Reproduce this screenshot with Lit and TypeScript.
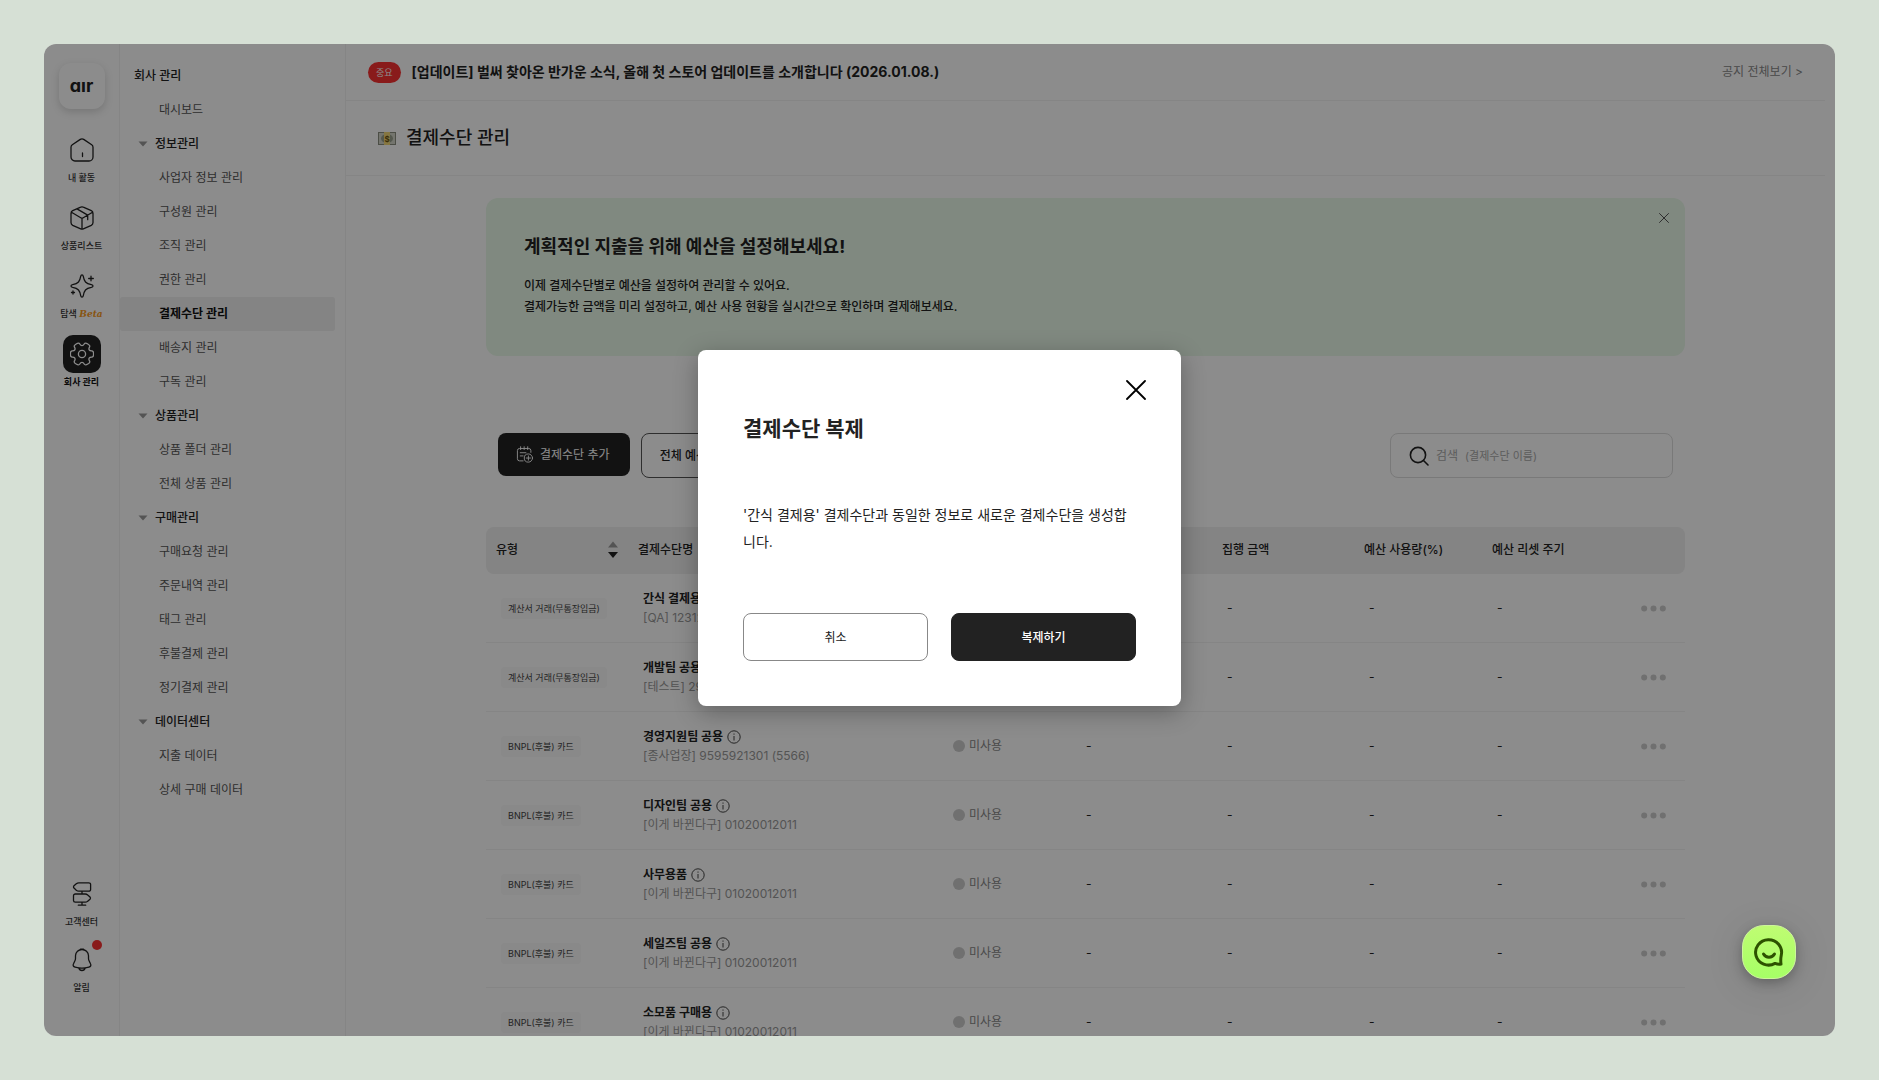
import { LitElement, html, css, svg } from "lit";
import { customElement } from "lit/decorators.js";

const stroke = (body: unknown, size = 24) => html`<svg
  width=${size}
  height=${size}
  viewBox="0 0 24 24"
  fill="none"
  stroke="currentColor"
  stroke-width="1.3"
  stroke-linecap="round"
  stroke-linejoin="round"
  aria-hidden="true"
>${body}</svg>`;

/** Outline of a six-toothed gear, rounded by running quadratics through the midpoints. */
function gearPath(): string {
  const points: [number, number][] = [];
  for (let tooth = 0; tooth < 6; tooth++) {
    for (const [offset, radius] of [[-15, 12], [15, 12], [21, 8.4], [39, 8.4]]) {
      const angle = ((tooth * 60 + offset) * Math.PI) / 180;
      points.push([12 + radius * Math.cos(angle), 12 + radius * Math.sin(angle)]);
    }
  }
  const mid = (i: number) => {
    const [a, b] = [points[i % points.length], points[(i + 1) % points.length]];
    return `${((a[0] + b[0]) / 2).toFixed(2)} ${((a[1] + b[1]) / 2).toFixed(2)}`;
  };
  let d = `M${mid(0)}`;
  for (let i = 1; i <= points.length; i++) {
    const p = points[i % points.length];
    d += `Q${p[0].toFixed(2)} ${p[1].toFixed(2)} ${mid(i)}`;
  }
  return d + "Z";
}

const icons = {
  home: stroke(svg`<path d="M10.3 1.4a3 3 0 0 1 3.4 0l8 5.4a3 3 0 0 1 1.3 2.5V19a4 4 0 0 1-4 4H5a4 4 0 0 1-4-4V9.3a3 3 0 0 1 1.3-2.5zM12.5 15v3.5"/>`),
  box: stroke(svg`<path d="M10.7 1.1a3 3 0 0 1 2.6 0l8 3.6A3 3 0 0 1 23 7.4v9.2a3 3 0 0 1-1.7 2.7l-8 3.6a3 3 0 0 1-2.6 0l-8-3.6A3 3 0 0 1 1 16.6V7.4a3 3 0 0 1 1.7-2.7zM1.5 6.2 12 12.5l10.500-6.300M12 12.500V23M7 2.900l10.700 6.200v4.600"/>`),
  sparkle: stroke(svg`<path d="M12 .8c.8 0 1.100.6 1.300 1.600.9 5 2.300 7.300 8 8.300 1 .2 1.700.5 1.700 1.300s-.7 1.100-1.700 1.300c-5.700 1-7.100 3.300-8 8.300-.2 1-.5 1.600-1.300 1.600s-1.100-.6-1.300-1.600c-.9-5-2.300-7.300-8-8.300C1.700 13.100 1 12.800 1 12s.7-1.100 1.700-1.300c5.700-1 7.100-3.300 8-8.300.2-1 .5-1.600 1.300-1.600zM21 2.200v4.600M18.700 4.500h4.600M3 17v3M1.500 18.500h3"/>`),
  gear: stroke(svg`<circle cx="12" cy="12" r="3.600"/><path d=${gearPath()} />`),
  sign: stroke(svg`<path d="M8.800.8h10a1.800 1.800 0 0 1 1.800 1.800v4.800a1.800 1.800 0 0 1-1.800 1.800h-10c-1.100 0-1.800-.4-2.500-1L4 6.100a1.600 1.600 0 0 1 0-2.300l2.300-2c.7-.6 1.400-1 2.500-1zM15.200 12H5.300a1.800 1.800 0 0 0-1.800 1.800v4.600a1.800 1.800 0 0 0 1.800 1.800h9.900c1.100 0 1.800-.4 2.500-1l2.300-2a1.600 1.600 0 0 0 0-2.200l-2.300-2c-.7-.6-1.400-1-2.500-1zM12 9.200V12M12 20.200v3M8.300 23.200h7.400"/>`),
  bell: stroke(svg`<path d="M12 1.500a6.500 6.500 0 0 0-6.500 6.300v2.700c0 1.100-.3 1.900-.8 2.800L3.500 15.700c-.9 1.700-.1 2.900 1.600 3.400 4.500 1.300 9.300 1.300 13.800 0 1.700-.5 2.500-1.700 1.600-3.400l-1.200-2.400c-.5-.9-.8-1.700-.8-2.800V7.800A6.500 6.500 0 0 0 12 1.500zM10.500 1.200h3M8.800 20c.5 1.700 1.700 2.500 3.200 2.500s2.700-.8 3.200-2.500"/>`),
  add: stroke(svg`<path d="M21 9V6.500a3 3 0 0 0-3-3H5a3 3 0 0 0-3 3V18a3 3 0 0 0 3 3h5M6.500 1v4M11.500 1v4M16.500 1v4M6 9.500h8M6 14h4M17.500 14v6M14.500 17h6"/><circle cx="17.500" cy="17" r="5.800"/>`, 17),
  search: html`<svg width="20" height="20" viewBox="0 0 20 20" fill="none" stroke="#222" stroke-width="1.600" stroke-linecap="round" aria-hidden="true"><circle cx="9" cy="9" r="7.600"/><path d="m14.500 14.500 4.500 4.500"/></svg>`,
  info: html`<svg class="info" width="14" height="14" viewBox="0 0 14 14" fill="none" stroke="#444" aria-hidden="true"><circle cx="7" cy="7" r="6.200"/><path d="M7 6v4.500M7 3.500v1.200"/></svg>`,
};

const cross = (size: number, width: number) => html`<svg width=${size} height=${size} viewBox="0 0 20 20" fill="none" stroke="currentColor" stroke-width=${width} stroke-linecap="round" aria-hidden="true"><path d="m1 1 18 18M19 1 1 19"/></svg>`;

const menu = [
  { items: ["대시보드"] },
  { title: "정보관리", items: ["사업자 정보 관리", "구성원 관리", "조직 관리", "권한 관리", "결제수단 관리", "배송지 관리", "구독 관리"] },
  { title: "상품관리", items: ["상품 폴더 관리", "전체 상품 관리"] },
  { title: "구매관리", items: ["구매요청 관리", "주문내역 관리", "태그 관리", "후불결제 관리", "정기결제 관리"] },
  { title: "데이터센터", items: ["지출 데이터", "상세 구매 데이터"] },
];

const INVOICE = "계산서 거래(무통장입금)";
const BNPL = "BNPL(후불) 카드";
const rows = [
  { type: INVOICE, name: "간식 결제용", sub: "[QA] 1231231231" },
  { type: INVOICE, name: "개발팀 공용", sub: "[테스트] 2948102931" },
  { type: BNPL, name: "경영지원팀 공용", sub: "[종사업장] 9595921301 (5566)" },
  { type: BNPL, name: "디자인팀 공용", sub: "[이게 바뀐다구] 01020012011" },
  { type: BNPL, name: "사무용품", sub: "[이게 바뀐다구] 01020012011" },
  { type: BNPL, name: "세일즈팀 공용", sub: "[이게 바뀐다구] 01020012011" },
  { type: BNPL, name: "소모품 구매용", sub: "[이게 바뀐다구] 01020012011" },
];

const base = css`
  :host, * { box-sizing: border-box; }
  h1, h2, p, ul, button, input { margin: 0; padding: 0; }
  button, input { font: inherit; color: inherit; border: 0; background: none; }
  a { color: inherit; text-decoration: none; }
  ul { list-style: none; }
  svg { display: block; flex: none; }
`;

@customElement("app-rail")
class AppRail extends LitElement {
  static styles = [base, css`
    :host { display: flex; flex-direction: column; align-items: center; flex: none; width: 76px; padding: 19px 0 39px; border-right: 1px solid #f2f2f2; }
    .logo { display: flex; align-items: center; justify-content: center; width: 46px; height: 46px; margin-bottom: 22px; border-radius: 12px; background: #fff; box-shadow: 0 3px 8px rgba(0, 0, 0, .16); font-size: 18px; line-height: 20px; font-weight: 700; font-feature-settings: "cv11"; color: #222; }
    .group { display: flex; flex-direction: column; gap: 12px; width: 100%; }
    .foot { margin-top: auto; gap: 10px; }
    .item { display: flex; flex-direction: column; align-items: center; font-size: 9px; line-height: 18px; font-weight: 500; color: #333; white-space: nowrap; }
    .tile { position: relative; display: flex; align-items: center; justify-content: center; width: 38px; height: 38px; border-radius: 10px; color: #222; }
    .active { font-weight: 700; color: #111; }
    .active .tile { background: #222; color: #fff; }
    .beta { font-family: "DejaVu Serif", serif; font-size: 9px; font-style: italic; font-weight: 700; color: #f79a1e; }
    .dot { position: absolute; top: -1px; right: -1px; width: 10px; height: 10px; border-radius: 50%; background: #fa3232; }
  `];
  render() {
    return html`
      <a class="logo" href="#">aır</a>
      <nav class="group">
        <a class="item" href="#"><span class="tile">${icons.home}</span>내 활동</a>
        <a class="item" href="#"><span class="tile">${icons.box}</span>상품리스트</a>
        <a class="item" href="#"><span class="tile">${icons.sparkle}</span><span>탐색 <span class="beta">Beta</span></span></a>
        <a class="item active" href="#"><span class="tile">${icons.gear}</span>회사 관리</a>
      </nav>
      <nav class="group foot">
        <a class="item" href="#"><span class="tile">${icons.sign}</span>고객센터</a>
        <a class="item" href="#"><span class="tile">${icons.bell}<span class="dot"></span></span>알림</a>
      </nav>`;
  }
}

@customElement("side-menu")
class SideMenu extends LitElement {
  static styles = [base, css`
    :host { display: block; flex: none; width: 226px; padding: 15px 10px 0 0; border-right: 1px solid #f2f2f2; font-size: 12px; line-height: 34px; color: #222; }
    .heading { padding-left: 14px; font-size: 12px; font-weight: 500; }
    .group { display: flex; align-items: center; gap: 7px; width: 100%; padding-left: 18px; font-weight: 500; }
    .item { display: block; padding-left: 39px; border-radius: 3px; color: #555; }
    .active { background: #f0f0f0; color: #111; font-weight: 700; }
  `];
  render() {
    return html`
      <h2 class="heading">회사 관리</h2>
      ${menu.map((g) => html`
        ${g.title ? html`<button class="group"><svg width="10" height="6" viewBox="0 0 10 6" fill="#999" aria-hidden="true"><path d="M.5.500h9L5 5.500z"/></svg>${g.title}</button>` : ""}
        <ul>${g.items.map((i) => html`<li><a href="#" class="item ${i === "결제수단 관리" ? "active" : ""}">${i}</a></li>`)}</ul>`)}`;
  }
}

@customElement("payment-table")
class PaymentTable extends LitElement {
  static styles = [base, css`
    :host { display: block; }
    .table { width: 100%; border-collapse: separate; border-spacing: 0; table-layout: fixed; font-size: 12px; line-height: 20px; color: #222; }
    .c-type { width: 142px; } .c-status { width: 133px; } .c-budget { width: 141px; } .c-spent { width: 142px; }
    .c-usage { width: 128px; } .c-reset { width: 128px; } .c-more { width: 75px; }
    th { height: 47px; padding: 0 10px 2px; background: #f0f0f0; text-align: left; font-weight: 500; }
    th:first-child { border-radius: 8px 0 0 8px; }
    th:last-child { border-radius: 0 8px 8px 0; }
    td { height: 69px; padding: 0 15px; border-bottom: 1px solid #f2f2f2; white-space: nowrap; }
    .sort { display: flex; align-items: center; justify-content: space-between; }
    .badge { display: inline-block; padding: 0 7px; border-radius: 4px; background: #f9f9f9; font-size: 9px; line-height: 21px; color: #444; vertical-align: middle; }
    .name { display: flex; align-items: center; gap: 4px; font-weight: 700; }
    .sub { line-height: 18px; color: #999; }
    .status { display: flex; align-items: center; gap: 4px; color: #888; }
    .status::before { content: ""; width: 12px; height: 12px; border-radius: 50%; background: #ccc; }
    .more { display: block; margin-left: auto; padding: 4px; }
    .cell-more { padding: 0 15px 0 0; }
  `];
  render() {
    return html`<table class="table">
      <colgroup><col class="c-type"><col><col class="c-status"><col class="c-budget"><col class="c-spent"><col class="c-usage"><col class="c-reset"><col class="c-more"></colgroup>
      <thead><tr>
        <th><span class="sort">유형 <button aria-label="정렬"><svg width="10" height="18" viewBox="0 0 10 18" aria-hidden="true"><path d="M0 6.500h10L5 .5z" fill="#999"/><path d="M0 11h10l-5 6z" fill="#222"/></svg></button></span></th>
        <th>결제수단명</th><th>상태</th><th>예산 금액</th><th>집행 금액</th><th>예산 사용량(%)</th><th>예산 리셋 주기</th><th></th>
      </tr></thead>
      <tbody>${rows.map((r) => html`<tr>
        <td><span class="badge">${r.type}</span></td>
        <td><div class="name">${r.name}${icons.info}</div><div class="sub">${r.sub}</div></td>
        <td><span class="status">미사용</span></td>
        <td>-</td><td>-</td><td>-</td><td>-</td>
        <td class="cell-more"><button class="more" aria-label="더보기"><svg width="25" height="7" viewBox="0 0 25 7" fill="#ccc" aria-hidden="true"><circle cx="3.200" cy="3.500" r="3"/><circle cx="12.500" cy="3.500" r="3"/><circle cx="21.800" cy="3.500" r="3"/></svg></button></td>
      </tr>`)}</tbody>
    </table>`;
  }
}

@customElement("clone-dialog")
class CloneDialog extends LitElement {
  static styles = [base, css`
    :host { display: block; width: 483px; }
    .dialog { position: relative; padding: 63px 45px 45px; border-radius: 8px; background: #fff; color: #222; box-shadow: 0 6px 24px rgba(0, 0, 0, .3); }
    .title { font-size: 21px; line-height: 32px; font-weight: 700; }
    .text { margin: 56px 0 58px; font-size: 14px; line-height: 27px; word-break: break-all; }
    .actions { display: grid; grid-template-columns: 1fr 1fr; gap: 23px; }
    .btn { height: 48px; padding-bottom: 2px; border: 1px solid #888; border-radius: 8px; font-size: 12px; }
    .primary { border-color: #222; background: #222; color: #fff; font-weight: 500; }
    .close { position: absolute; top: 30px; right: 35px; color: #000; }
  `];
  render() {
    return html`<div class="dialog" role="dialog" aria-modal="true" aria-labelledby="t">
      <button class="close" aria-label="닫기">${cross(20, 1.8)}</button>
      <h2 class="title" id="t">결제수단 복제</h2>
      <p class="text">'간식 결제용' 결제수단과 동일한 정보로 새로운 결제수단을 생성합니다.</p>
      <div class="actions"><button class="btn">취소</button><button class="btn primary">복제하기</button></div>
    </div>`;
  }
}

@customElement("app-root")
class AppRoot extends LitElement {
  static styles = [base, css`
    :host { display: block; height: 100vh; padding: 44px; background: #d6e0d5; font-family: Inter, "Noto Sans CJK KR", sans-serif; color: #222; }
    .window { position: relative; display: flex; height: 100%; overflow: hidden; border-radius: 12px; background: #fff; }
    .main { flex: 1; min-width: 0; padding-right: 10px; }
    .notice { display: flex; align-items: center; height: 57px; padding: 0 22px; border-bottom: 1px solid #f2f2f2; }
    .tag { padding: 0 8px; margin-right: 11px; border-radius: 11px; background: #fa3232; color: #fff; font-size: 9px; line-height: 21px; }
    .headline { font-size: 14px; line-height: 20px; font-weight: 700; }
    .all { margin-left: auto; font-size: 12px; line-height: 20px; color: #888; }
    .head { display: flex; align-items: center; gap: 10px; height: 75px; padding: 0 32px; border-bottom: 1px solid #f2f2f2; }
    .page { font-size: 18px; line-height: 24px; font-weight: 500; }
    .content { max-width: 1199px; margin: 0 auto; padding-top: 22px; }
    .banner { position: relative; padding: 35px 38px 39px; border-radius: 12px; background: #e9fae9; }
    .banner-title { margin-bottom: 15px; font-size: 18px; line-height: 27px; font-weight: 700; }
    .banner-text { font-size: 12px; line-height: 21px; font-weight: 500; }
    .banner-close { position: absolute; top: 15px; right: 16px; color: #555; }
    .tools { display: flex; align-items: flex-start; gap: 11px; margin: 77px 12px 49px; font-size: 12px; line-height: 20px; }
    .add { display: flex; align-items: center; gap: 7px; height: 43px; padding: 0 20px 0 18px; border-radius: 8px; background: #222; color: #fff; }
    .line { height: 45px; padding: 0 18px; border: 1px solid #555; border-radius: 8px; font-weight: 500; }
    .search { display: flex; align-items: center; gap: 7px; width: 283px; height: 45px; margin-left: auto; padding: 0 18px; border: 1px solid #ddd; border-radius: 8px; color: #aaa; }
    .search input { flex: 1; min-width: 0; font-size: 11px; outline: 0; }
    .search input::placeholder { color: #aaa; opacity: 1; }
    .shade { position: absolute; inset: 0; display: flex; align-items: center; justify-content: center; padding-bottom: 24px; background: rgba(0, 0, 0, .45); }
    .chat { position: absolute; right: 39px; bottom: 57px; display: flex; align-items: center; justify-content: center; width: 54px; height: 54px; border: 1px solid #cdf69a; border-radius: 22px; background: linear-gradient(#bffc72, #a6ff66); box-shadow: 0 4px 12px rgba(0, 0, 0, .25), 0 6px 40px rgba(0, 0, 0, .1); }
  `];
  render() {
    return html`<div class="window">
      <app-rail></app-rail>
      <side-menu></side-menu>
      <main class="main">
        <div class="notice"><span class="tag">중요</span><a class="headline" href="#">[업데이트] 벌써 찾아온 반가운 소식, 올해 첫 스토어 업데이트를 소개합니다 (2026.01.08.)</a><a class="all" href="#">공지 전체보기 &gt;</a></div>
        <header class="head">
          <svg width="18" height="13" viewBox="0 0 18 13" aria-hidden="true"><rect width="18" height="13" fill="#8a8f80"/><rect x="1" y="1" width="16" height="11" fill="#d3d6c8"/><ellipse cx="9" cy="6.500" rx="6" ry="4.500" fill="#9aa08f"/><rect x="6" width="6" height="13" fill="#f2d778"/><text x="9" y="9.500" text-anchor="middle" font-size="8" font-weight="700" fill="#6b5310">$</text></svg>
          <h1 class="page">결제수단 관리</h1>
        </header>
        <div class="content">
          <section class="banner">
            <h2 class="banner-title">계획적인 지출을 위해 예산을 설정해보세요!</h2>
            <p class="banner-text">이제 결제수단별로 예산을 설정하여 관리할 수 있어요.<br>결제가능한 금액을 미리 설정하고, 예산 사용 현황을 실시간으로 확인하며 결제해보세요.</p>
            <button class="banner-close" aria-label="배너 닫기">${cross(10, 2)}</button>
          </section>
          <div class="tools">
            <button class="add">${icons.add}결제수단 추가</button>
            <button class="line">전체 예산 관리</button>
            <label class="search">${icons.search}<span>검색</span><input type="text" placeholder="(결제수단 이름)"></label>
          </div>
          <payment-table></payment-table>
        </div>
      </main>
      <div class="shade"><clone-dialog></clone-dialog></div>
      <button class="chat" aria-label="채팅 상담"><svg width="30" height="30" viewBox="0 0 30 30" fill="none" stroke="#2d5200" stroke-width="3" stroke-linecap="round" stroke-linejoin="round" aria-hidden="true"><path d="M27 27c-2 .4-3.500.3-6-.6A13 12.700 0 1 1 27.300 18c-.5 2.500-.9 5-.3 9z"/><path d="M9.500 17c2.500 4.200 8.500 4.200 11 0"/></svg></button>
    </div>`;
  }
}
